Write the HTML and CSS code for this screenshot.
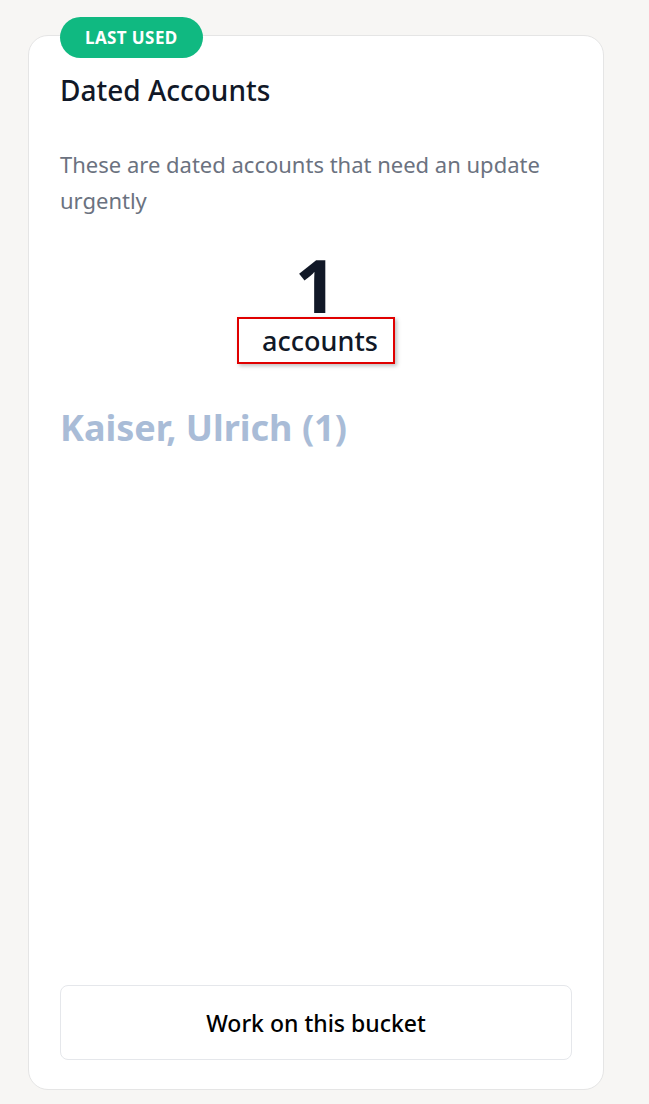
FILE: index.html
```html
<!DOCTYPE html>
<html lang="en">
<head>
    <meta charset="UTF-8">
    <meta name="viewport" content="width=device-width, initial-scale=1.0">
    <title>buckets</title>
    <link rel="stylesheet" href="styles.css">
</head>
<body>
    <div class="bucket-card">
        <div class="badge">LAST USED</div>
        <div class="bucket-title">Dated Accounts</div>
        <p class="bucket-desc">These are dated accounts that need an update urgently</p>

        <div class="count">
            <div class="count-num">1</div>
            <div class="count-label">accounts</div>
        </div>

        <div class="owner">Kaiser, Ulrich (1)</div>

        <div class="spacer"></div>

        <button class="work-btn">Work on this bucket</button>
    </div>
</body>
</html>
```

FILE: styles.css
```css
* { margin: 0; padding: 0; box-sizing: border-box; }

body {
    font-family: 'Noto Sans', 'Open Sans', sans-serif;
    background: #f7f6f4;
    color: #111827;
    padding: 35px 45px 14px 28px;
    min-height: 1104px;
}

.bucket-card {
    position: relative;
    background: #fff;
    border: 1px solid #e5e5e5;
    border-radius: 20px;
    height: 1055px;
    padding: 35px 31px 29px 31px;
    display: flex;
    flex-direction: column;
}

.badge {
    position: absolute;
    top: -19px;
    left: 31px;
    height: 41px;
    padding: 0 25px;
    border-radius: 21px;
    background: #10b981;
    color: #fff;
    font-size: 17px;
    font-weight: 700;
    line-height: 41px;
    letter-spacing: 0.4px;
}

.bucket-title {
    font-size: 28px;
    font-weight: 500;
    line-height: 38px;
    color: #111827;
}

.bucket-desc {
    margin-top: 37px;
    font-size: 22px;
    line-height: 36px;
    color: #6b7280;
}

.count {
    margin-top: 38px;
    display: flex;
    flex-direction: column;
    align-items: center;
}

.count-num {
    font-size: 74px;
    font-weight: 700;
    line-height: 58px;
    color: #111827;
}

.count-label {
    margin-top: 3px;
    border: 2px solid #e00000;
    box-shadow: 2px 2px 4px rgba(0, 0, 0, 0.25);
    padding: 3px 15px 3px 23px;
    font-size: 27px;
    font-weight: 500;
    line-height: 37px;
    color: #111827;
}

.owner {
    margin-top: 40px;
    font-size: 36px;
    font-weight: 700;
    line-height: 48px;
    color: #a9bcd7;
}

.spacer { flex: 1; }

.work-btn {
    width: 100%;
    height: 75px;
    background: #fff;
    border: 1px solid #e5e7eb;
    border-radius: 8px;
    font-family: inherit;
    font-size: 23px;
    font-weight: 500;
    color: #000;
    cursor: pointer;
}
```
